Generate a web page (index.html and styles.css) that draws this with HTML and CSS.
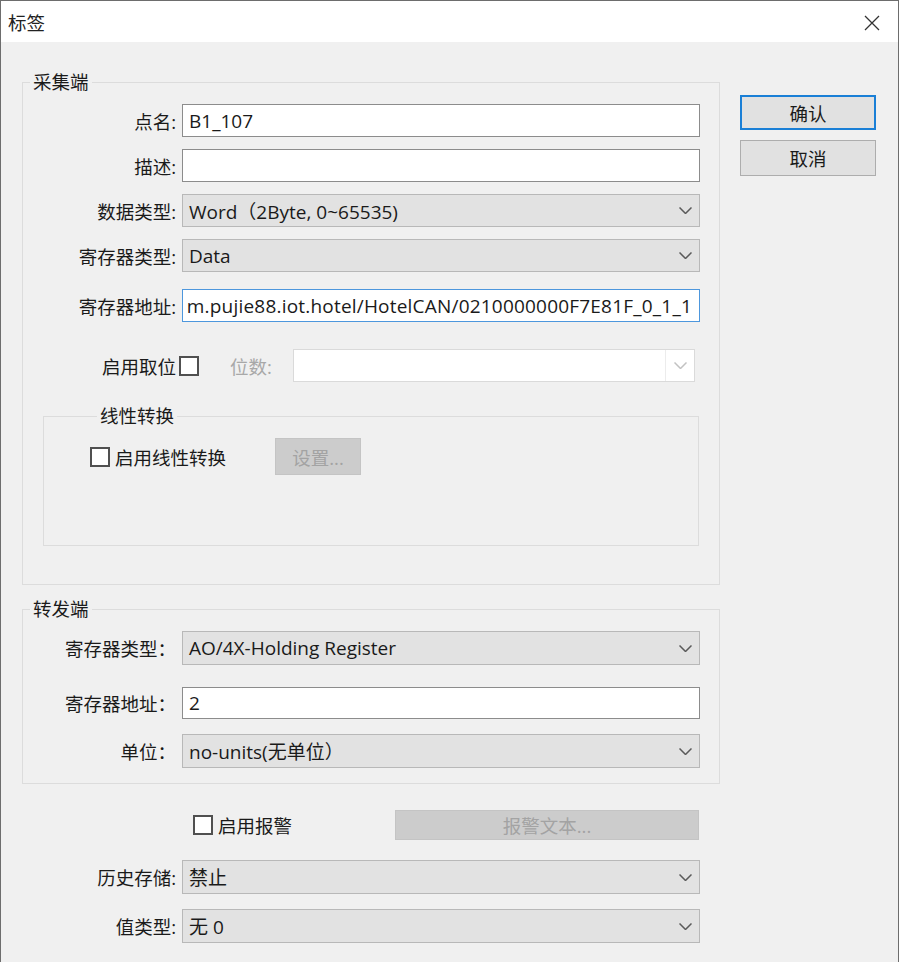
FILE: index.html
```html
<!DOCTYPE html>
<html lang="zh-CN">
<head>
  <meta charset="UTF-8" />
  <title>标签</title>
  <link rel="stylesheet" href="styles.css">
</head>
<body>

<div class="window">
  <!-- title bar -->
  <div class="titlebar">
    <span class="title">标签</span>
    <svg class="close" viewBox="0 0 16 16"><path d="M1 1L15 15M15 1L1 15"/></svg>
  </div>

  <div class="dialog">
    <div class="main">

      <!-- 采集端 -->
      <fieldset class="group">
        <legend>采集端</legend>
        <div class="row">
          <span class="lbl">点名:</span>
          <div class="field edit">B1_107</div>
        </div>
        <div class="row">
          <span class="lbl">描述:</span>
          <div class="field edit"></div>
        </div>
        <div class="row">
          <span class="lbl">数据类型:</span>
          <div class="field combo">Word（2Byte, 0~65535)
            <svg class="arrow" viewBox="0 0 13 7"><path d="M0.5 0.5L6.5 6.5L12.5 0.5"/></svg>
          </div>
        </div>
        <div class="row">
          <span class="lbl">寄存器类型:</span>
          <div class="field combo">Data
            <svg class="arrow" viewBox="0 0 13 7"><path d="M0.5 0.5L6.5 6.5L12.5 0.5"/></svg>
          </div>
        </div>
        <div class="row row-addr">
          <span class="lbl">寄存器地址:</span>
          <div class="field edit focus"><span>m.pujie88.iot.hotel/HotelCAN/0210000000F7E81F_0_1_1</span></div>
        </div>
        <div class="row row-bit">
          <span class="lbl">启用取位</span>
          <span class="check check-bit"></span>
          <span class="dim">位数:</span>
          <div class="combo-off">
            <span class="drop"><svg class="arrow" viewBox="0 0 13 7"><path d="M0.5 0.5L6.5 6.5L12.5 0.5"/></svg></span>
          </div>
        </div>

        <fieldset class="subgroup">
          <legend>线性转换</legend>
          <div class="sub-row">
            <span class="check"></span>
            <span class="check-text">启用线性转换</span>
            <span class="btn-off btn-set">设置...</span>
          </div>
        </fieldset>
      </fieldset>

      <!-- 转发端 -->
      <fieldset class="group group-fwd">
        <legend>转发端</legend>
        <div class="row row-first">
          <span class="lbl">寄存器类型：</span>
          <div class="field combo tall">AO/4X-Holding Register
            <svg class="arrow" viewBox="0 0 13 7"><path d="M0.5 0.5L6.5 6.5L12.5 0.5"/></svg>
          </div>
        </div>
        <div class="row row-mid">
          <span class="lbl">寄存器地址：</span>
          <div class="field edit short">2</div>
        </div>
        <div class="row row-last">
          <span class="lbl">单位：</span>
          <div class="field combo tall">no-units(无单位）
            <svg class="arrow" viewBox="0 0 13 7"><path d="M0.5 0.5L6.5 6.5L12.5 0.5"/></svg>
          </div>
        </div>
      </fieldset>

      <!-- 报警 / 存储 -->
      <div class="tail">
        <div class="alarm-row">
          <span class="check check-alarm"></span>
          <span class="check-text">启用报警</span>
          <span class="btn-off btn-alarm">报警文本...</span>
        </div>
        <div class="row row-history">
          <span class="lbl">历史存储:</span>
          <div class="field combo tall">禁止
            <svg class="arrow" viewBox="0 0 13 7"><path d="M0.5 0.5L6.5 6.5L12.5 0.5"/></svg>
          </div>
        </div>
        <div class="row">
          <span class="lbl">值类型:</span>
          <div class="field combo tall">无 0
            <svg class="arrow" viewBox="0 0 13 7"><path d="M0.5 0.5L6.5 6.5L12.5 0.5"/></svg>
          </div>
        </div>
      </div>
    </div>

    <div class="side">
      <button class="btn btn-default">确认</button>
      <button class="btn">取消</button>
    </div>
  </div>
</div>

</body>
</html>
```

FILE: styles.css
```css
* {
  margin: 0;
  padding: 0;
  box-sizing: border-box;
}
body {
  background: #fff;
  font-family: "Open Sans", "Noto Sans CJK SC", sans-serif;
  font-size: 18.5px;
  color: #1a1a1a;
}

.window {
  width: 899px;
  height: 962px;
  border: 1px solid #6d6d6d;
  border-bottom: none;
  background: #f0f0f0;
}

/* title bar */
.titlebar {
  height: 41px;
  background: #fff;
  display: flex;
  align-items: center;
  justify-content: space-between;
  padding: 0 18px 0 7px;
}
.title {
  color: #222;
}
.close {
  width: 16px;
  height: 16px;
  margin-top: 2px;
  stroke: #333;
  stroke-width: 1.3;
  fill: none;
}

.dialog {
  display: flex;
  padding: 29px 0 0 21px;
}
.main {
  width: 698px;
}
.side {
  margin-left: 20px;
  padding-top: 24px;
  display: flex;
  flex-direction: column;
  gap: 10px;
}

/* groups */
fieldset {
  border: 1px solid #dcdcdc;
  min-width: 0;
}
legend {
  margin-left: 7px;
  padding: 0 3px;
  line-height: 22px;
}
.group {
  width: 698px;
  padding: 11px 19px 38px 0;
}
.group-fwd {
  margin-top: 13px;
  padding-bottom: 15px;
}
.subgroup {
  margin: 23px 1px 0 20px;
  padding: 11px 0 70px 46px;
}

/* rows */
.row {
  display: flex;
  align-items: center;
  margin-bottom: 12px;
}
.row-addr {
  margin-top: 17px;
}
.row-bit {
  margin-top: 27px;
  margin-bottom: 0;
}
.lbl {
  width: 153px;
  flex: none;
  text-align: right;
  white-space: nowrap;
}
.field {
  flex: none;
  margin-left: 6px;
  width: 518px;
  height: 33px;
  display: flex;
  align-items: center;
  padding-left: 6px;
  font-size: 19px;
  white-space: nowrap;
  overflow: hidden;
}
.field.tall {
  height: 34px;
}
.field.short {
  height: 32px;
}
.edit {
  background: #fff;
  border: 1px solid #8c8c8c;
}
.edit.focus {
  border-color: #4d97dd;
  justify-content: flex-end;
  padding-right: 7px;
  letter-spacing: 0.2px;
}
.combo {
  background: #e2e2e2;
  border: 1px solid #b8b8b8;
}
.arrow {
  width: 13px;
  height: 7px;
  margin: 0 7px 0 auto;
  flex: none;
  stroke: #5a5a5a;
  stroke-width: 1.5;
  fill: none;
}

.row-first { margin-bottom: 22px; }
.row-mid { margin-bottom: 15px; }
.row-last { margin-bottom: 0; }

/* checkbox */
.check {
  width: 20px;
  height: 20px;
  flex: none;
  background: #fff;
  border: 2px solid #505050;
}
.check-bit {
  margin-left: 3px;
}
.check-text {
  margin-left: 5px;
  white-space: nowrap;
}
.dim {
  margin-left: 31px;
  color: #a8a8a8;
}
.combo-off {
  margin-left: auto;
  margin-right: 5px;
  width: 402px;
  height: 33px;
  background: #fff;
  border: 1px solid #dadada;
  display: flex;
  justify-content: flex-end;
}
.drop {
  width: 29px;
  display: flex;
  align-items: center;
  border-left: 1px solid #ececec;
}
.drop .arrow {
  margin: 0 auto;
  stroke: #c2c2c2;
}

.sub-row {
  display: flex;
  align-items: center;
}
.btn-off {
  display: flex;
  align-items: center;
  justify-content: center;
  background: #cccccc;
  border: 1px solid #c4c4c4;
  color: #a3a3a3;
}
.btn-set {
  margin-left: 49px;
  width: 86px;
  height: 37px;
}

/* bottom part */
.tail {
  margin-top: 26px;
  padding: 0 20px 0 1px;
}
.alarm-row {
  display: flex;
  align-items: center;
  height: 30px;
  margin-bottom: 20px;
}
.check-alarm {
  margin-left: 170px;
}
.btn-alarm {
  margin-left: auto;
  margin-right: 1px;
  width: 304px;
  height: 30px;
}
.row-history {
  margin-bottom: 15px;
}

/* buttons */
.btn {
  width: 136px;
  height: 36px;
  background: #e1e1e1;
  border: 1px solid #adadad;
  font-family: inherit;
  font-size: 18.5px;
  color: #1a1a1a;
}
.btn-default {
  height: 35px;
  border: 2px solid #1a7fd6;
}
```
